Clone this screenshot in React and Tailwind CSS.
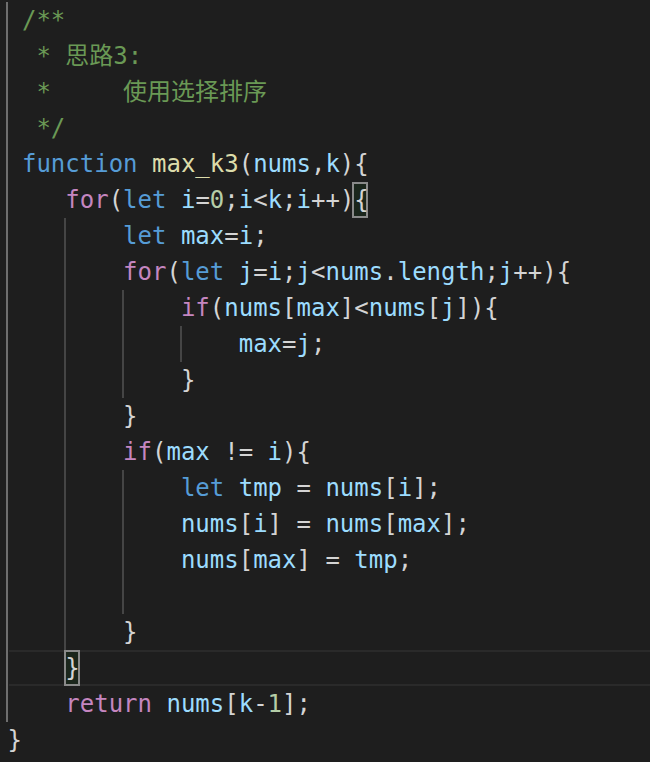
import React from 'react';

// token colours (VS Code Dark+)
const C = {
  cm: 'text-[#6a9955]',
  kw: 'text-[#569cd6]',
  ct: 'text-[#c586c0]',
  v: 'text-[#9cdcfe]',
  fn: 'text-[#dcdcaa]',
  n: 'text-[#b5cea8]',
  p: 'text-[#d4d4d4]',
};

const GUIDE_LEFT = {
  0: 'left-[6px] bg-[#6e6e6e]',
  4: 'left-[64px] bg-[#454545]',
  8: 'left-[122px] bg-[#454545]',
  12: 'left-[180px] bg-[#454545]',
};

// each line: tokens [text, colour], guides (indent columns)
const lines = [
  { t: [[' /**', 'cm']], g: [0] },
  { t: [['  * 思路3:', 'cm']], g: [0] },
  { t: [['  *     使用选择排序', 'cm']], g: [0] },
  { t: [['  */', 'cm']], g: [0] },
  { t: [[' ', 'p'], ['function', 'kw'], [' ', 'p'], ['max_k3', 'fn'], ['(', 'p'], ['nums', 'v'], [',', 'p'], ['k', 'v'], ['){', 'p']], g: [0] },
  {
    t: [['    ', 'p'], ['for', 'ct'], ['(', 'p'], ['let', 'kw'], [' ', 'p'], ['i', 'v'], ['=', 'p'], ['0', 'n'], [';', 'p'], ['i', 'v'], ['<', 'p'], ['k', 'v'], [';', 'p'], ['i', 'v'], ['++)', 'p'], ['{', 'p']],
    g: [0],
    box: 'left-[352px]',
  },
  { t: [['        ', 'p'], ['let', 'kw'], [' ', 'p'], ['max', 'v'], ['=', 'p'], ['i', 'v'], [';', 'p']], g: [0, 4] },
  {
    t: [['        ', 'p'], ['for', 'ct'], ['(', 'p'], ['let', 'kw'], [' ', 'p'], ['j', 'v'], ['=', 'p'], ['i', 'v'], [';', 'p'], ['j', 'v'], ['<', 'p'], ['nums', 'v'], ['.', 'p'], ['length', 'v'], [';', 'p'], ['j', 'v'], ['++){', 'p']],
    g: [0, 4],
  },
  { t: [['            ', 'p'], ['if', 'ct'], ['(', 'p'], ['nums', 'v'], ['[', 'p'], ['max', 'v'], [']<', 'p'], ['nums', 'v'], ['[', 'p'], ['j', 'v'], [']){', 'p']], g: [0, 4, 8] },
  { t: [['                ', 'p'], ['max', 'v'], ['=', 'p'], ['j', 'v'], [';', 'p']], g: [0, 4, 8, 12] },
  { t: [['            }', 'p']], g: [0, 4, 8] },
  { t: [['        }', 'p']], g: [0, 4] },
  { t: [['        ', 'p'], ['if', 'ct'], ['(', 'p'], ['max', 'v'], [' != ', 'p'], ['i', 'v'], ['){', 'p']], g: [0, 4] },
  { t: [['            ', 'p'], ['let', 'kw'], [' ', 'p'], ['tmp', 'v'], [' = ', 'p'], ['nums', 'v'], ['[', 'p'], ['i', 'v'], ['];', 'p']], g: [0, 4, 8] },
  { t: [['            ', 'p'], ['nums', 'v'], ['[', 'p'], ['i', 'v'], ['] = ', 'p'], ['nums', 'v'], ['[', 'p'], ['max', 'v'], ['];', 'p']], g: [0, 4, 8] },
  { t: [['            ', 'p'], ['nums', 'v'], ['[', 'p'], ['max', 'v'], ['] = ', 'p'], ['tmp', 'v'], [';', 'p']], g: [0, 4, 8] },
  { t: [['', 'p']], g: [0, 4, 8] },
  { t: [['        }', 'p']], g: [0, 4] },
  { t: [['    }', 'p']], g: [0], box: 'left-[64px]', current: true },
  { t: [['    ', 'p'], ['return', 'ct'], [' ', 'p'], ['nums', 'v'], ['[', 'p'], ['k', 'v'], ['-', 'p'], ['1', 'n'], ['];', 'p']], g: [0] },
  { t: [['}', 'p']], g: [] },
];

const Line = ({ line }) => (
  <div className="relative h-[36px]">
    {line.current && (
      <div className="absolute left-[9px] right-0 top-0 h-[36px] border-y-2 border-[#2a2a2a]" />
    )}
    {line.g.map((col) => (
      <div key={col} className={`absolute top-0 h-[36px] w-[2px] ${GUIDE_LEFT[col]}`} />
    ))}
    {line.box && (
      <div className={`absolute top-0 h-[36px] w-[16px] border-2 border-[#8a8a8a] bg-[#1b261c] ${line.box}`} />
    )}
    <div className="relative pl-[7.5px] whitespace-pre leading-[36px]">
      {line.t.map(([text, c], i) => (
        <span key={i} className={C[c]}>
          {text}
        </span>
      ))}
    </div>
  </div>
);

export default function App() {
  return (
    <div
      className="w-[650px] h-[762px] overflow-hidden bg-[#1e1e1e] pt-[2px] text-[24px] text-[#d4d4d4]"
      style={{ fontFamily: '"DejaVu Sans Mono", "Noto Sans CJK SC", monospace' }}
    >
      {lines.map((line, i) => (
        <Line key={i} line={line} />
      ))}
    </div>
  );
}
